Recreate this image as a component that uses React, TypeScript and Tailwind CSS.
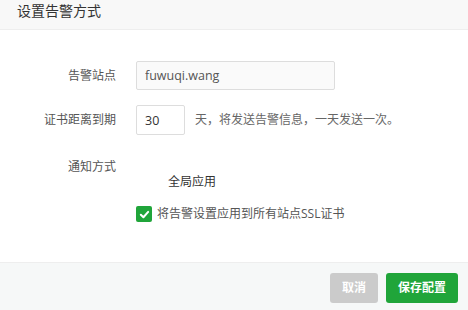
import React, { useState } from 'react'

const font = { fontFamily: '"Open Sans", "Noto Sans CJK SC", sans-serif' }

export default function App() {
  const [checked, setChecked] = useState(true)
  const [days, setDays] = useState('30')

  return (
    <div className="h-[310px] w-[468px] flex flex-col bg-white text-[12px] text-[#555]" style={font}>
      {/* Header */}
      <div className="h-[30px] shrink-0 bg-[#f8f8f8] border-b border-[#eeeeee] px-[17px] pt-[2px] text-[14px] leading-[17px] text-[#333]">
        设置告警方式
      </div>

      {/* Body */}
      <div className="flex-1 pt-[31px]">
        <div className="flex items-center h-[29px]">
          <div className="w-[116px] text-right">告警站点</div>
          <input
            readOnly
            value="fuwuqi.wang"
            className="ml-[20px] h-[29px] w-[199px] border border-[#dddddd] rounded-[2px] bg-[#fafafa] px-[8px] text-[12.5px] text-[#555] outline-none"
          />
        </div>

        <div className="flex items-center h-[30px] mt-[15px]">
          <div className="w-[116px] text-right">证书距离到期</div>
          <input
            value={days}
            onChange={e => setDays(e.target.value)}
            className="ml-[20px] h-[30px] w-[49px] border border-[#dddddd] rounded-[2px] bg-white px-[8px] text-[12.5px] text-[#333] outline-none"
          />
          <span className="ml-[10px] text-[#666]">天，将发送告警信息，一天发送一次。</span>
        </div>

        <div className="flex mt-[24px]">
          <div className="w-[116px] text-right leading-[16px]">通知方式</div>
          <div className="ml-[20px]">
            <div className="pt-[15px] pl-[32px] leading-[16px] text-[#333]">全局应用</div>
            <label className="mt-[16px] flex items-center cursor-pointer" onClick={() => setChecked(!checked)}>
              <span
                className={`w-[16px] h-[16px] rounded-[2px] flex items-center justify-center ${
                  checked ? 'bg-[#20a53a]' : 'bg-white border border-[#ccc]'
                }`}
              >
                {checked && (
                  <svg width="11" height="11" viewBox="0 0 12 12">
                    <path d="M2 6.3 L4.8 9 L10 3.2" fill="none" stroke="#fff" strokeWidth="2.2" strokeLinecap="round" strokeLinejoin="round" />
                  </svg>
                )}
              </span>
              <span className="ml-[5px] leading-[16px] text-[#555]">将告警设置应用到所有站点SSL证书</span>
            </label>
          </div>
        </div>
      </div>

      {/* Footer */}
      <div className="h-[48px] shrink-0 bg-[#f6f8f8] border-t border-[#eeeeee] flex justify-end items-start pt-[10px] pr-[10px] gap-[8px]">
        <button className="h-[30px] w-[48px] rounded-[3px] bg-[#cbcbcb] text-white text-[12px] font-bold">取消</button>
        <button className="h-[30px] w-[72px] rounded-[3px] bg-[#20a53a] text-white text-[12px] font-bold">保存配置</button>
      </div>
    </div>
  )
}
